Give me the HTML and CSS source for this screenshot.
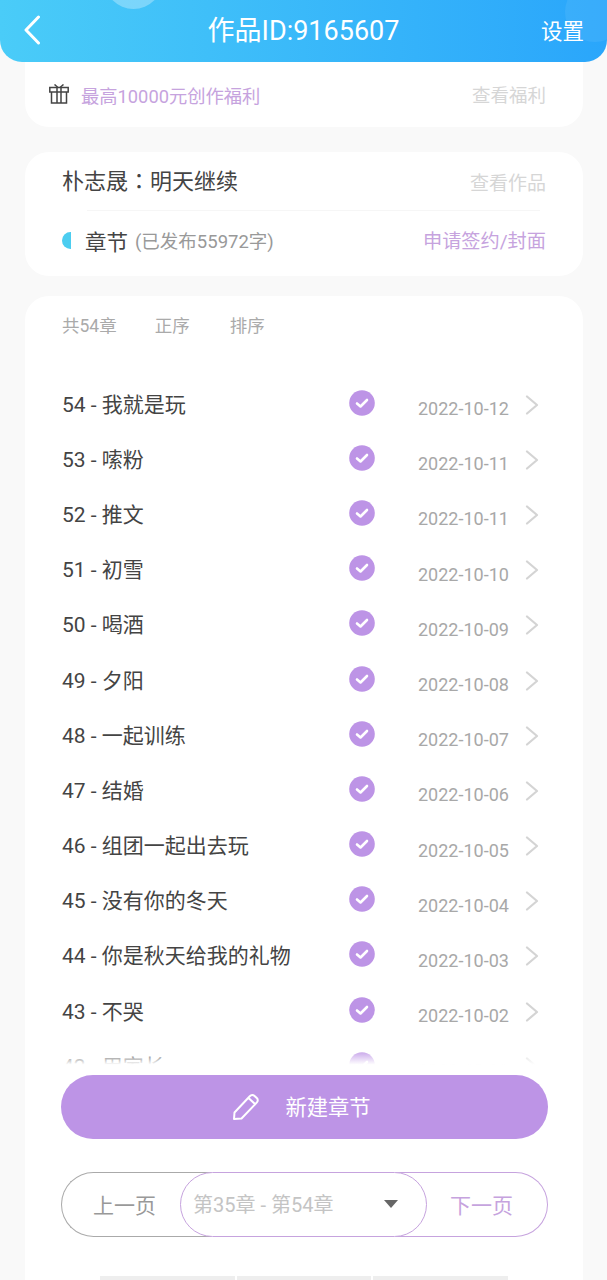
FILE: index.html
```html
<!DOCTYPE html>
<html lang="zh-CN">
<head>
  <meta charset="UTF-8">
  <meta name="viewport" content="width=device-width, initial-scale=1.0">
  <title>作品ID:9165607</title>
  <link rel="stylesheet" href="styles.css">
</head>
<body>

<header class="topbar">
  <span class="bubble bubble-top"></span>
  <span class="bubble bubble-right"></span>
  <svg class="back" width="18" height="30" viewBox="0 0 18 30"><path d="M15.500 2 3 15l12.500 13" fill="none" stroke="#fff" stroke-width="3" stroke-linecap="round" stroke-linejoin="round"/></svg>
  <h1>作品ID:9165607</h1>
  <span class="settings">设置</span>
</header>

<section class="card welfare">
  <svg class="gift" width="20" height="20" viewBox="0 0 20 20"><g fill="none" stroke="#444" stroke-width="1.500"><path d="M.8 3.500h18.400v4.500H.8zM2.500 8h15v11h-15zM8 3.500V19M12 3.500V19"/><path d="M5.500.5 9 3.500M14.500.5 11 3.500"/></g></svg>
  <span class="welfare-text">最高10000元创作福利</span>
  <span class="link-muted">查看福利</span>
</section>

<section class="card info">
  <div class="info-row">
    <span class="work-title" lang="zh-Hant">朴志晟：明天继续</span>
    <span class="link-muted big">查看作品</span>
  </div>
  <div class="info-line"></div>
  <div class="info-row">
    <span class="half-dot"></span>
    <span class="chapter-label">章节</span>
    <span class="chapter-count">(已发布55972字)</span>
    <span class="apply">申请签约/封面</span>
  </div>
</section>

<section class="card chapters">
  <div class="sort-bar">
    <span>共54章</span>
    <span>正序</span>
    <span>排序</span>
  </div>

  <ul class="chapter-list" id="chapterList"></ul>

  <button class="new-chapter">
    <svg width="28" height="28" viewBox="0 0 28 28"><path d="M2 26 2.500 19.500 18 3a3 3 0 0 1 4.300-.2l2.500 2.300a3 3 0 0 1 .1 4.300L9.500 25.500zM16.500 5l7 6.500" fill="none" stroke="#fff" stroke-width="2" stroke-linejoin="round"/></svg>
    <span>新建章节</span>
  </button>

  <div class="pager">
    <span class="prev">上一页</span>
    <span class="range">第35章 - 第54章<i class="caret"></i></span>
    <span class="next">下一页</span>
  </div>

  <div class="foot-tabs">
    <span></span><span></span><span></span>
  </div>
</section>

<script>
  const chapters = [
    ["54 - 我就是玩", "2022-10-12"],
    ["53 - 嗦粉", "2022-10-11"],
    ["52 - 推文", "2022-10-11"],
    ["51 - 初雪", "2022-10-10"],
    ["50 - 喝酒", "2022-10-09"],
    ["49 - 夕阳", "2022-10-08"],
    ["48 - 一起训练", "2022-10-07"],
    ["47 - 结婚", "2022-10-06"],
    ["46 - 组团一起出去玩", "2022-10-05"],
    ["45 - 没有你的冬天", "2022-10-04"],
    ["44 - 你是秋天给我的礼物", "2022-10-03"],
    ["43 - 不哭", "2022-10-02"],
    ["42 - 用家长", "2022-10-01"]
  ];

  const list = document.getElementById("chapterList");
  chapters.forEach(item => {
    const row = document.createElement("li");
    row.innerHTML = `
      <span class="name">${item[0]}</span>
      <svg class="tick" width="26" height="26" viewBox="0 0 26 26"><circle cx="13" cy="13" r="12.800" fill="#bd94e6"/><path d="M8 13.500l3.500 3L18 10" fill="none" stroke="#fff" stroke-width="2.600" stroke-linecap="round" stroke-linejoin="round"/></svg>
      <span class="date">${item[1]}</span>
      <svg class="arrow" width="14" height="20" viewBox="0 0 14 20"><path d="M2 1.500 12 10 2 18.500" fill="none" stroke="#d4d4d4" stroke-width="2.200" stroke-linecap="round" stroke-linejoin="round"/></svg>
    `;
    list.appendChild(row);
  });
</script>

</body>
</html>
```

FILE: styles.css
```css
body {
  margin: 0;
  height: 1280px;
  overflow: hidden;
  background-color: #f9f9f9;
  font-family: Roboto, "Noto Sans CJK SC", sans-serif;
  color: #444;
}
.topbar {
  position: relative;
  z-index: 2;
  display: flex;
  align-items: center;
  justify-content: center;
  height: 62px;
  overflow: hidden;
  border-radius: 0 0 22px 22px;
  background-image: linear-gradient(to right, #4accf8, #2aa6fb);
  color: #fff;
}
.topbar h1 {
  margin: 0 0 6px;
  font-size: 27px;
  font-weight: 400;
}
.bubble {
  position: absolute;
  border-radius: 50%;
  background-color: rgba(255, 255, 255, 0.3);
}
.bubble-top {
  left: 104px;
  top: -50px;
  width: 59px;
  height: 59px;
}
.bubble-right {
  left: 565px;
  top: -18px;
  width: 60px;
  height: 60px;
  background-color: rgba(255, 255, 255, 0.07);
}
.back {
  position: absolute;
  left: 23px;
  top: 15px;
}
.settings {
  position: absolute;
  right: 23px;
  top: 14px;
  font-size: 21.500px;
}
.card {
  margin: 0 24px 0 25px;
  border-radius: 24px;
  background-color: #fff;
}
.welfare {
  display: flex;
  align-items: center;
  box-sizing: border-box;
  height: 89px;
  margin-top: -24px;
  padding: 22px 37px 0 24px;
}
.gift {
  margin-right: 12px;
}
.welfare-text {
  flex: 1;
  margin-top: 2px;
  font-size: 18.300px;
  color: #c6a3de;
}
.link-muted {
  font-size: 18.500px;
  color: #d6d6d6;
}
.link-muted.big {
  font-size: 19px;
}
.info {
  margin-top: 25px;
  height: 124px;
  padding: 0 37px;
}
.info-row {
  display: flex;
  align-items: center;
  height: 58px;
}
.info-line {
  height: 1px;
  margin: 0 6px 0 25px;
  background-color: #f6f6f6;
}
.work-title {
  flex: 1;
  margin-bottom: 4px;
  font-family: Roboto, "Noto Sans CJK TC", sans-serif;
  font-size: 22px;
}
.half-dot {
  width: 9px;
  height: 17px;
  margin-right: 14px;
  border-radius: 9px 0 0 9px;
  background-color: #4ccdf0;
}
.chapter-label {
  font-size: 21.500px;
}
.chapter-count {
  flex: 1;
  margin-left: 7px;
  font-size: 18.500px;
  color: #999;
}
.apply {
  font-size: 19.200px;
  color: #c6a3de;
}
.chapters {
  position: relative;
  margin-top: 20px;
  padding: 0 37px;
  height: 1010px;
}
.sort-bar {
  display: flex;
  gap: 38px;
  height: 57px;
  align-items: center;
  font-size: 17.500px;
  color: #aaa;
}
.sort-bar span:last-child {
  margin-left: 2px;
}
.chapter-list {
  position: relative;
  height: 698px;
  margin: 24px 0 0;
  padding: 0;
  list-style: none;
  overflow: hidden;
}
.chapter-list::after {
  content: "";
  position: absolute;
  left: 0;
  right: 0;
  bottom: 0;
  height: 26px;
  background-image: linear-gradient(to bottom, rgba(255, 255, 255, 0), #fff 60%);
}
.chapter-list li {
  display: flex;
  align-items: center;
  height: 55.200px;
}
.name {
  flex: 1;
  margin-bottom: 4px;
  font-size: 21px;
}
.tick {
  margin: 0 43px 4px 0;
}
.date {
  width: 107px;
  margin-top: 8px;
  font-size: 18px;
  color: #a8a8a8;
}
.arrow {
  margin-right: 7px;
}
.new-chapter {
  display: flex;
  align-items: center;
  justify-content: center;
  gap: 25px;
  width: 487px;
  height: 64px;
  margin-left: -1px;
  padding: 0 6px 3px 0;
  border: none;
  border-radius: 32px;
  background-color: #bd94e6;
  color: #fff;
  font-family: inherit;
  font-size: 21.300px;
}
.new-chapter svg {
  margin-top: 3px;
}
.pager {
  display: flex;
  margin: 33px 0 0 -1px;
  width: 487px;
  height: 65px;
  font-size: 21px;
}
.pager > span {
  display: flex;
  align-items: center;
  box-sizing: border-box;
  height: 65px;
  padding-bottom: 2px;
  background-color: #fff;
}
.prev {
  width: 150px;
  padding-left: 31px;
  border: 1.500px solid #aaa;
  border-radius: 33px 0 0 33px;
  border-right: none;
  color: #999;
}
.range {
  position: relative;
  z-index: 1;
  width: 247px;
  margin-left: -31px;
  padding-left: 12px;
  border: 1.500px solid #c6a3de;
  border-radius: 33px;
  font-size: 20px;
  color: #c4c4c4;
}
.caret {
  position: absolute;
  left: 203px;
  top: 27px;
  border-style: solid;
  border-width: 8px 7.500px 0;
  border-color: #666 transparent transparent;
}
.next {
  width: 152px;
  margin-left: -31px;
  padding-left: 54px;
  border: 1.500px solid #c6a3de;
  border-left: none;
  border-radius: 0 33px 33px 0;
  color: #c6a3de;
}
.foot-tabs {
  display: flex;
  gap: 2px;
  width: 408px;
  margin: 39px 0 0 38px;
}
.foot-tabs span {
  flex: 1;
  height: 10px;
  background-color: #eee;
}
```
